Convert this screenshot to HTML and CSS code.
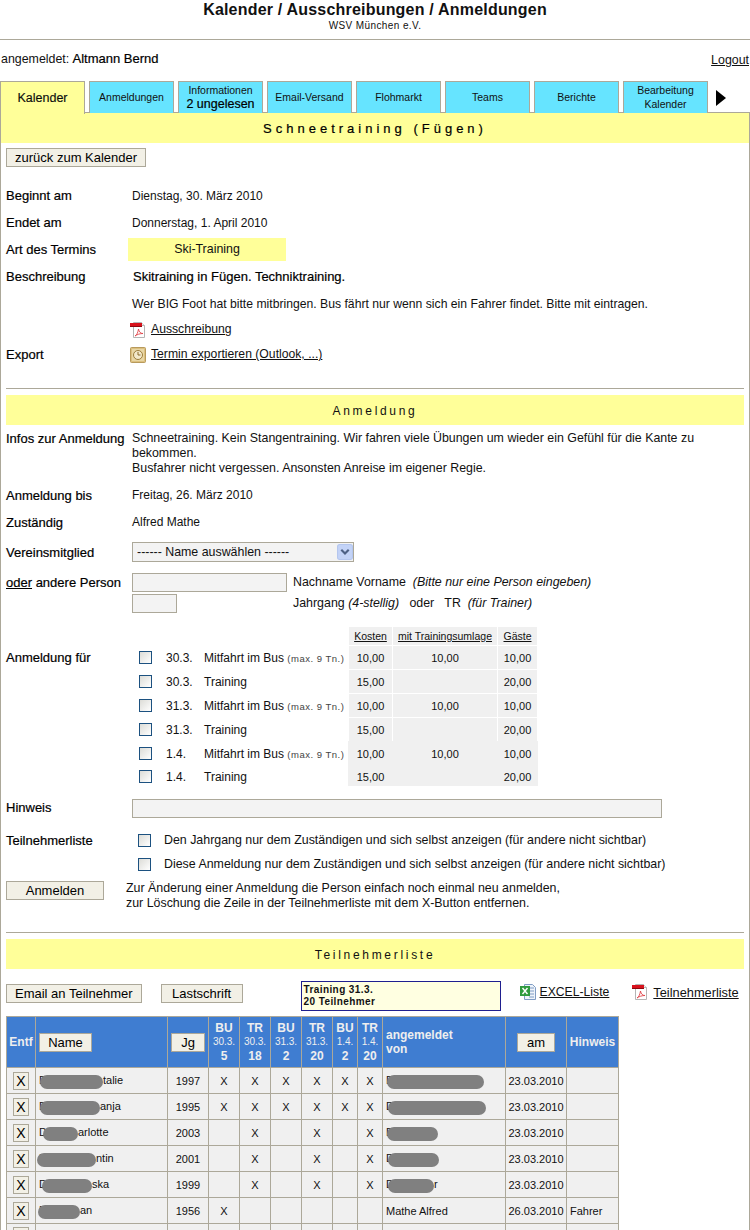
FILE: index.html
```html
<!DOCTYPE html>
<html lang="de">
<head>
    <meta charset="UTF-8">
    <title>Kalender / Ausschreibungen / Anmeldungen</title>
    <link rel="stylesheet" href="styles.css">
</head>
<body>

<svg class="defs" width="0" height="0">
    <symbol id="pdf" viewBox="0 0 16 16">
        <path d="M3.5 .5h8l3 3v12h-11z" fill="#fff" stroke="#b5b5b5"/>
        <path d="M11.5 .5v3h3" fill="#eee" stroke="#b5b5b5"/>
        <rect x="0" y="1" width="12" height="4" fill="#d8121c"/>
        <rect x="0" y="4" width="12" height="1" fill="#8c0a10"/>
        <path d="M5 14c2-1 3-4 3.5-7 .5 3 2 4.500 4.500 4.500-3 0-6 1-8 2.500z" fill="none" stroke="#e0444a" stroke-width=".9"/>
    </symbol>
    <symbol id="clock" viewBox="0 0 16 16">
        <rect x=".5" y=".5" width="15" height="15" rx="1" fill="#dcc07f" stroke="#b89a5c"/>
        <rect x="2" y="2" width="12" height="12" fill="#e8d6a5"/>
        <circle cx="8" cy="8" r="4.500" fill="#f3e9cb" stroke="#9c7d3c"/>
        <path d="M8 5v3h2.500" fill="none" stroke="#8a6a2c"/>
    </symbol>
    <symbol id="excel" viewBox="0 0 16 16">
        <path d="M4.500 .5h8l3 3v12h-11z" fill="#eef3fa" stroke="#7f9cc4"/>
        <path d="M9 4h5M9 7h5M9 10h5M9 13h5" stroke="#7f9cc4"/>
        <rect x="0" y="2" width="10" height="10" fill="#2f9a3e"/>
        <path d="M2.500 4l5 6M7.500 4l-5 6" stroke="#fff" stroke-width="1.400"/>
    </symbol>
</svg>

<div class="head">
    <h1>Kalender / Ausschreibungen / Anmeldungen</h1>
    <div class="verein">WSV München e.V.</div>
</div>

<div class="login">
    <span><span class="wide">angemeldet:</span> <span class="strong">Altmann Bernd</span></span>
    <a href="#" class="logout">Logout</a>
</div>

<div class="tabs">
    <div class="tab active">Kalender</div>
    <div class="tab">Anmeldungen</div>
    <div class="tab two">Informationen<br><span class="unread">2 ungelesen</span></div>
    <div class="tab">Email-Versand</div>
    <div class="tab">Flohmarkt</div>
    <div class="tab">Teams</div>
    <div class="tab">Berichte</div>
    <div class="tab two">Bearbeitung<br>Kalender</div>
    <div class="arrow"></div>
</div>

<div class="content">
    <div class="title-bar">Schneetraining (Fügen)</div>
    <div class="back"><button class="btn">zurück zum Kalender</button></div>

    <div class="rows">
        <div class="row"><div class="lbl">Beginnt am</div><div class="val">Dienstag, 30. März 2010</div></div>
        <div class="row"><div class="lbl">Endet am</div><div class="val">Donnerstag, 1. April 2010</div></div>
        <div class="row"><div class="lbl">Art des Termins</div><div class="art">Ski-Training</div></div>
        <div class="row"><div class="lbl">Beschreibung</div><div class="strong descr">Skitraining in Fügen. Techniktraining.</div></div>
        <div class="row"><div></div><div class="val wer">Wer BIG Foot hat bitte mitbringen. Bus fährt nur wenn sich ein Fahrer findet. Bitte mit eintragen.</div></div>
        <div class="row short"><div></div><div class="link-line"><svg class="ico"><use href="#pdf"/></svg><a href="#">Ausschreibung</a></div></div>
        <div class="row short"><div class="lbl">Export</div><div class="link-line"><svg class="ico"><use href="#clock"/></svg><a href="#">Termin exportieren (Outlook, ...)</a></div></div>
    </div>

    <hr class="rule">
    <div class="sub-bar">Anmeldung</div>

    <div class="infos">
        <div class="lbl">Infos zur Anmeldung</div>
        <div class="wide">Schneetraining. Kein Stangentraining. Wir fahren viele Übungen um wieder ein Gefühl für die Kante zu bekommen.<br>Busfahrer nicht vergessen. Ansonsten Anreise im eigener Regie.</div>
    </div>

    <div class="rows">
        <div class="row"><div class="lbl">Anmeldung bis</div><div>Freitag, 26. März 2010</div></div>
        <div class="row"><div class="lbl">Zuständig</div><div>Alfred Mathe</div></div>
        <div class="row member">
            <div class="lbl">Vereinsmitglied</div>
            <div class="select-box">
                <select class="select"><option>------ Name auswählen ------</option></select>
                <svg class="select-arrow" viewBox="0 0 15 15">
                    <rect x=".5" y=".5" width="14" height="14" rx="2" fill="#c3d3f7" stroke="#b4c6ee"/>
                    <path d="M4 5.500l3.500 3.500 3.500-3.500" fill="none" stroke="#4d6185" stroke-width="2"/>
                </svg>
            </div>
        </div>
    </div>

    <div class="person">
        <div class="lbl person-lbl"><u>oder</u> andere Person</div>
        <div class="person-grid wide">
            <input class="field f-name" type="text">
            <div>Nachname Vorname &nbsp;<em>(Bitte nur eine Person eingeben)</em></div>
            <input class="field f-year" type="text">
            <div>Jahrgang <em>(4-stellig)</em> &nbsp; oder &nbsp; TR &nbsp;<em>(für Trainer)</em></div>
        </div>
    </div>

    <div class="signup">
        <div class="lbl signup-lbl">Anmeldung für</div>
        <table class="options">
            <tr class="opt-head">
                <td class="o-check"></td><td class="o-date"></td><td class="o-what"></td>
                <td class="cost c1"><u>Kosten</u></td><td class="cost c2"><u>mit Trainingsumlage</u></td><td class="cost c3"><u>Gäste</u></td>
            </tr>
            <tr>
                <td class="o-check"><input class="check" type="checkbox"></td><td>30.3.</td><td>Mitfahrt im Bus <span class="small">(max. 9 Tn.)</span></td>
                <td class="cost">10,00</td><td class="cost">10,00</td><td class="cost">10,00</td>
            </tr>
            <tr>
                <td class="o-check"><input class="check" type="checkbox"></td><td>30.3.</td><td>Training</td>
                <td class="cost">15,00</td><td class="cost"></td><td class="cost">20,00</td>
            </tr>
            <tr>
                <td class="o-check"><input class="check" type="checkbox"></td><td>31.3.</td><td>Mitfahrt im Bus <span class="small">(max. 9 Tn.)</span></td>
                <td class="cost">10,00</td><td class="cost">10,00</td><td class="cost">10,00</td>
            </tr>
            <tr class="open-below">
                <td class="o-check"><input class="check" type="checkbox"></td><td>31.3.</td><td>Training</td>
                <td class="cost">15,00</td><td class="cost"></td><td class="cost">20,00</td>
            </tr>
            <tr class="open">
                <td class="o-check"><input class="check" type="checkbox"></td><td>1.4.</td><td>Mitfahrt im Bus <span class="small">(max. 9 Tn.)</span></td>
                <td class="cost">10,00</td><td class="cost">10,00</td><td class="cost">10,00</td>
            </tr>
            <tr class="open last">
                <td class="o-check"><input class="check" type="checkbox"></td><td>1.4.</td><td>Training</td>
                <td class="cost">15,00</td><td class="cost"></td><td class="cost">20,00</td>
            </tr>
        </table>
    </div>

    <div class="hint-row">
        <div class="lbl">Hinweis</div>
        <input class="field f-hint" type="text">
    </div>

    <div class="visible">
        <div class="lbl">Teilnehmerliste</div>
        <div class="visible-list wide">
            <label class="vis"><input class="check" type="checkbox">Den Jahrgang nur dem Zuständigen und sich selbst anzeigen (für andere nicht sichtbar)</label>
            <label class="vis"><input class="check" type="checkbox">Diese Anmeldung nur dem Zuständigen und sich selbst anzeigen (für andere nicht sichtbar)</label>
        </div>
    </div>

    <div class="submit">
        <button class="btn btn-wide">Anmelden</button>
        <div class="wide">Zur Änderung einer Anmeldung die Person einfach noch einmal neu anmelden,<br>zur Löschung die Zeile in der Teilnehmerliste mit dem X-Button entfernen.</div>
    </div>

    <hr class="rule">
    <div class="sub-bar">Teilnehmerliste</div>

    <div class="actions">
        <button class="btn">Email an Teilnehmer</button>
        <button class="btn btn-last">Lastschrift</button>
        <div class="sum-box">Training 31.3.<br>20 Teilnehmer</div>
        <div class="link-line l-excel"><svg class="ico"><use href="#excel"/></svg><a href="#">EXCEL-Liste</a></div>
        <div class="link-line l-pdf"><svg class="ico"><use href="#pdf"/></svg><a href="#">Teilnehmerliste</a></div>
    </div>

    <table class="people">
        <colgroup>
            <col class="w29"><col class="w132"><col class="w41">
            <col class="w31"><col class="w31"><col class="w31"><col class="w31">
            <col class="w25"><col class="w25"><col class="w123"><col class="w61"><col class="w52">
        </colgroup>
        <tr class="people-head">
            <th>Entf</th>
            <th class="th-left"><button class="btn btn-th b-name">Name</button></th>
            <th><button class="btn btn-th b-jg">Jg</button></th>
            <th>BU<span class="th-date">30.3.</span><span class="th-num">5</span></th>
            <th>TR<span class="th-date">30.3.</span><span class="th-num">18</span></th>
            <th>BU<span class="th-date">31.3.</span><span class="th-num">2</span></th>
            <th>TR<span class="th-date">31.3.</span><span class="th-num">20</span></th>
            <th>BU<span class="th-date">1.4.</span><span class="th-num">2</span></th>
            <th>TR<span class="th-date">1.4.</span><span class="th-num">20</span></th>
            <th class="th-left">angemeldet<br>von</th>
            <th><button class="btn btn-th b-am">am</button></th>
            <th>Hinweis</th>
        </tr>
        <tr>
            <td><button class="del">X</button></td>
            <td class="left">D<span class="blob n1"></span>talie</td>
            <td>1997</td><td>X</td><td>X</td><td>X</td><td>X</td><td>X</td><td>X</td>
            <td class="left">D<span class="blob v1"></span></td>
            <td>23.03.2010</td><td></td>
        </tr>
        <tr>
            <td><button class="del">X</button></td>
            <td class="left">D<span class="blob n2"></span>anja</td>
            <td>1995</td><td>X</td><td>X</td><td>X</td><td>X</td><td>X</td><td>X</td>
            <td class="left">D<span class="blob v2"></span></td>
            <td>23.03.2010</td><td></td>
        </tr>
        <tr>
            <td><button class="del">X</button></td>
            <td class="left">D<span class="blob n3"></span>arlotte</td>
            <td>2003</td><td></td><td>X</td><td></td><td>X</td><td></td><td>X</td>
            <td class="left">D<span class="blob v3"></span></td>
            <td>23.03.2010</td><td></td>
        </tr>
        <tr>
            <td><button class="del">X</button></td>
            <td class="left">D<span class="blob n4"></span>ntin</td>
            <td>2001</td><td></td><td>X</td><td></td><td>X</td><td></td><td>X</td>
            <td class="left">D<span class="blob v4"></span></td>
            <td>23.03.2010</td><td></td>
        </tr>
        <tr>
            <td><button class="del">X</button></td>
            <td class="left">D<span class="blob n5"></span>ska</td>
            <td>1999</td><td></td><td>X</td><td></td><td>X</td><td></td><td>X</td>
            <td class="left">D<span class="blob v5"></span>r</td>
            <td>23.03.2010</td><td></td>
        </tr>
        <tr>
            <td><button class="del">X</button></td>
            <td class="left">D<span class="blob n6"></span>an</td>
            <td>1956</td><td>X</td><td></td><td></td><td></td><td></td><td></td>
            <td class="left">Mathe Alfred</td>
            <td>26.03.2010</td><td class="left">Fahrer</td>
        </tr>
        <tr>
            <td><button class="del"></button></td>
            <td></td><td></td><td></td><td></td><td></td><td></td><td></td><td></td><td></td><td></td><td></td>
        </tr>
    </table>
</div>

</body>
</html>
```

FILE: styles.css
```css
html, body {
    margin: 0;
    height: 1230px;
    overflow: hidden;
}
body {
    font-family: "Liberation Sans", Arial, sans-serif;
    font-size: 12px;
    line-height: 15px;
    color: #111;
    background: #fff;
}
.defs { position: absolute; }
a { color: #111; font-size: 12.400px; }
.strong, .lbl {
    font-size: 13px;
    color: #000;
    -webkit-text-stroke: .2px #000;
}
.wide { font-size: 12.400px; }

/* header */
.head {
    height: 39px;
    border-bottom: 1px solid #aca899;
    text-align: center;
}
h1 {
    margin: 0;
    font-size: 16px;
    line-height: 19px;
    letter-spacing: .2px;
}
.verein {
    font-size: 10px;
    line-height: 13px;
    letter-spacing: .4px;
}
.login {
    display: flex;
    justify-content: space-between;
    height: 41px;
    padding: 11px 1px 0 1px;
    box-sizing: border-box;
}
.logout { padding-top: 2px; }

/* tabs */
.tabs {
    display: flex;
    gap: 4px;
    height: 31px;
}
.tab {
    box-sizing: border-box;
    width: 85px;
    height: 32px;
    padding-top: 8px;
    border: 1px solid #aca899;
    border-bottom: 0;
    background: #66e4ff;
    font-size: 10.500px;
    line-height: 14px;
    text-align: center;
}
.tab.two { padding-top: 1px; }
.tab.active {
    position: relative;
    z-index: 1;
    height: 33px;
    padding-top: 9px;
    background: #ffff99;
    font-size: 12.500px;
    -webkit-text-stroke: .15px #000;
}
.unread {
    font-size: 12.500px;
    color: #000;
    -webkit-text-stroke: .2px #000;
}
.arrow {
    width: 0;
    height: 0;
    margin: 9px 0 0 4px;
    border-left: 10px solid #000;
    border-top: 8px solid transparent;
    border-bottom: 8px solid transparent;
}

/* content */
.content {
    height: 1117px;
    border: 1px solid #aca899;
    border-bottom: 0;
}
.title-bar {
    height: 30px;
    background: #ffff99;
    font-size: 13px;
    line-height: 32px;
    letter-spacing: 4px;
    text-align: center;
    color: #000;
    -webkit-text-stroke: .2px #000;
}
.back { padding: 5px 5px 0; height: 34px; }
.btn {
    box-sizing: border-box;
    height: 19px;
    padding: 0 8px;
    border: 1px solid #aca899;
    background: #f2f0e6;
    color: #000;
    font-family: "Liberation Sans", Arial, sans-serif;
    font-size: 13px;
    line-height: 17px;
}
.rows { padding: 0 5px; }
.row {
    display: grid;
    grid-template-columns: 126px 1fr;
    height: 27px;
    align-items: center;
}
.row.short { height: 25px; }
.val { padding-top: 1px; }
.art {
    width: 158px;
    height: 23px;
    margin-left: -4px;
    background: #ffff99;
    font-size: 12.400px;
    line-height: 23px;
    text-align: center;
}
.descr { margin-left: 1px; }
.wer { font-size: 12.200px; }
.link-line {
    display: flex;
    align-items: center;
    gap: 5px;
}
.ico {
    width: 16px;
    height: 16px;
    flex: none;
}
.row .link-line { margin-left: -2px; }
.row .link-line a { font-size: 12.200px; }
.rule {
    height: 1px;
    margin: 21px 5px 0;
    border: 0;
    background: #aca899;
}
.sub-bar {
    height: 30px;
    margin: 6px 5px 0;
    background: #ffff99;
    line-height: 32px;
    letter-spacing: 2.700px;
    text-align: center;
}

/* form */
.infos {
    display: grid;
    grid-template-columns: 126px 1fr;
    height: 57px;
    padding: 6px 5px 0;
    box-sizing: border-box;
}
.member { height: 32px; }
.select-box {
    position: relative;
    width: 222px;
    height: 20px;
}
.select {
    appearance: none;
    box-sizing: border-box;
    width: 222px;
    height: 20px;
    padding: 0 4px;
    border: 1px solid #aca899;
    border-radius: 0;
    background: #f3f3f3;
    color: #111;
    font-family: "Liberation Sans", Arial, sans-serif;
    font-size: 12.400px;
}
.select-arrow {
    position: absolute;
    top: 2px;
    right: 1px;
    width: 16px;
    height: 16px;
}
.person {
    display: grid;
    grid-template-columns: 126px 1fr;
    height: 58px;
    padding: 5px 5px 0;
    box-sizing: border-box;
}
.person-lbl { padding-top: 2px; }
.person-grid {
    display: grid;
    grid-template-columns: 161px 1fr;
    align-content: start;
    align-items: center;
    row-gap: 2px;
}
.field {
    box-sizing: border-box;
    display: block;
    height: 19px;
    padding: 0;
    border: 1px solid #aca899;
    background: #f3f3f3;
}
.f-name { width: 155px; }
.f-year { width: 45px; }
.f-hint { width: 530px; }
.signup {
    display: grid;
    grid-template-columns: 126px 1fr;
    padding: 0 5px;
}
.signup-lbl { padding-top: 24px; }
.options {
    border-collapse: collapse;
    table-layout: fixed;
    width: 405px;
    justify-self: start;
}
.options td {
    height: 22px;
    padding: 1px 0 0;
}
.options .o-check { width: 34px; padding-left: 7px; box-sizing: border-box; }
.options .o-check .check { margin-top: -1px; }
.o-date { width: 38px; }
.o-what { width: 144px; }
.check {
    appearance: none;
    display: block;
    flex: none;
    width: 13px;
    height: 13px;
    margin: 0;
    border: 1px solid #1c5180;
    background: linear-gradient(135deg, #dcdcd7, #fff);
}
.small { font-size: 9.500px; letter-spacing: .5px; color: #444; }
.options .cost {
    border: 1px solid #fff;
    background: #f0f0f0;
    text-align: center;
    font-size: 11px;
}
.c1 { width: 43px; }
.c2 { width: 104px; }
.c3 { width: 39px; }
.options .opt-head td { height: 18px; padding-top: 0; }
.options .opt-head .cost { font-size: 10.500px; }
.options .open-below .cost { border-bottom-color: #f0f0f0; }
.options .open .cost { border-color: #f0f0f0; }
.options .last td { height: 16px; padding-top: 3px; }
.hint-row {
    display: grid;
    grid-template-columns: 126px 1fr;
    align-items: center;
    padding: 13px 5px 0;
}
.hint-row .lbl { margin-bottom: 2px; }
.visible {
    display: grid;
    grid-template-columns: 126px 1fr;
    padding: 15px 5px 0;
}
.visible-list { display: grid; row-gap: 9px; }
.vis {
    display: flex;
    align-items: center;
    gap: 13px;
    padding-left: 6px;
}
.submit {
    display: flex;
    gap: 22px;
    padding: 9px 5px 0;
}
.btn-wide { width: 98px; flex: none; }

/* list */
.actions {
    display: flex;
    align-items: flex-start;
    height: 35px;
    padding: 12px 5px 0;
}
.actions .btn { margin-top: 3px; }
.btn-last { width: 82px; margin-left: 19px; padding: 0; }
.sum-box {
    box-sizing: border-box;
    width: 200px;
    height: 30px;
    margin-left: 58px;
    padding: 2px;
    border: 1px solid #1f1f8f;
    background: #ffffe1;
    font-size: 10px;
    font-weight: bold;
    line-height: 12px;
    letter-spacing: .4px;
}
.l-excel { margin: 3px 0 0 19px; gap: 4px; }
.l-excel a { font-size: 12.200px; }
.l-pdf { margin: 3px 0 0 23px; }
.l-pdf a { font-size: 12.800px; }

.people {
    border-collapse: collapse;
    table-layout: fixed;
    width: 613px;
    margin-left: 5px;
}
.w29 { width: 29px; }
.w132 { width: 132px; }
.w41 { width: 41px; }
.w31 { width: 31px; }
.w25 { width: 25px; }
.w123 { width: 123px; }
.w61 { width: 61px; }
.w52 { width: 52px; }
.people th, .people td {
    border: 1px solid #aca899;
    padding: 0;
    text-align: center;
    font-size: 11px;
    overflow: hidden;
    white-space: nowrap;
}
.people th {
    height: 50px;
    background: #3f7dd1;
    color: #eee;
    font-size: 12px;
    line-height: 14px;
}
.people td {
    height: 24px;
    padding-top: 1px;
    background: #f0f0f0;
}
.people .th-left, .people .left {
    padding-left: 3px;
    text-align: left;
}
.th-date {
    display: block;
    font-size: 10px;
    font-weight: normal;
}
.th-num { display: block; }
.people .btn-th { padding: 0; font-weight: normal; }
.b-name { width: 53px; }
.b-jg { width: 34px; }
.b-am { width: 38px; }
.del {
    box-sizing: border-box;
    width: 16px;
    height: 18px;
    padding: 0;
    border: 1px solid #aca899;
    background: #f2f0e6;
    color: #000;
    font-family: "Liberation Sans", Arial, sans-serif;
    font-size: 14px;
    line-height: 16px;
}

/* blurred names */
.blob {
    display: inline-block;
    height: 14px;
    vertical-align: middle;
    border-radius: 7px;
    background: #808080;
    filter: blur(.6px);
}
.n1 { width: 63px; margin-left: -7px; }
.n2 { width: 60px; margin-left: -7px; }
.n3 { width: 35px; margin-left: -4px; }
.n4 { width: 59px; margin-left: -10px; }
.n5 { width: 50px; margin-left: -5px; }
.n6 { width: 42px; margin-left: -9px; }
.v1 { width: 97px; margin-left: -7px; }
.v2 { width: 98px; margin-left: -6px; }
.v3 { width: 51px; margin-left: -7px; }
.v4 { width: 51px; margin-left: -6px; }
.v5 { width: 46px; margin-left: -6px; }
```
